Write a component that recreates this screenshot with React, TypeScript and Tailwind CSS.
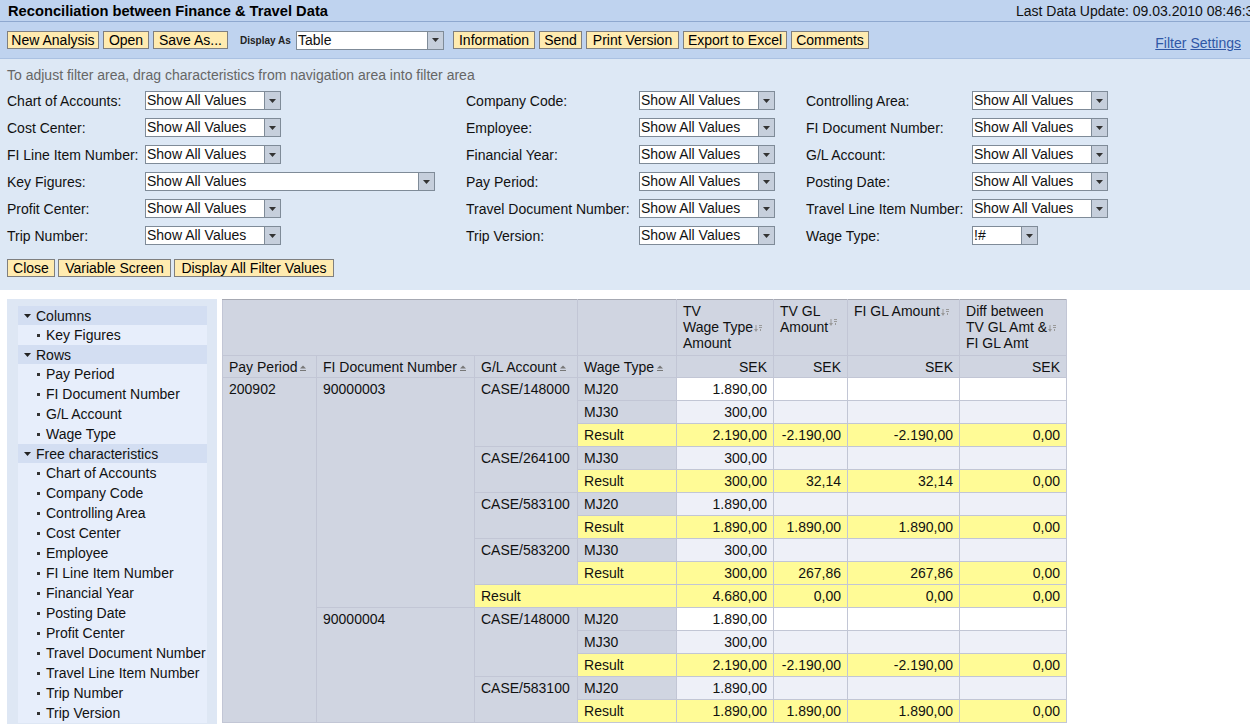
import React from 'react';

type Cell = [string, number];
interface Row {
  pay?: Cell;
  doc?: Cell;
  gl?: Cell;
  wt?: string;
  docResult?: boolean;
  vals: string[];
  bg: 'w' | 'a' | 'y';
}

const rows: Row[] = [
  { pay: ['200902', 15], doc: ['90000003', 10], gl: ['CASE/148000', 3], wt: 'MJ20', vals: ['1.890,00', '', '', ''], bg: 'w' },
  { wt: 'MJ30', vals: ['300,00', '', '', ''], bg: 'a' },
  { wt: 'Result', vals: ['2.190,00', '-2.190,00', '-2.190,00', '0,00'], bg: 'y' },
  { gl: ['CASE/264100', 2], wt: 'MJ30', vals: ['300,00', '', '', ''], bg: 'a' },
  { wt: 'Result', vals: ['300,00', '32,14', '32,14', '0,00'], bg: 'y' },
  { gl: ['CASE/583100', 2], wt: 'MJ20', vals: ['1.890,00', '', '', ''], bg: 'a' },
  { wt: 'Result', vals: ['1.890,00', '1.890,00', '1.890,00', '0,00'], bg: 'y' },
  { gl: ['CASE/583200', 2], wt: 'MJ30', vals: ['300,00', '', '', ''], bg: 'a' },
  { wt: 'Result', vals: ['300,00', '267,86', '267,86', '0,00'], bg: 'y' },
  { docResult: true, vals: ['4.680,00', '0,00', '0,00', '0,00'], bg: 'y' },
  { doc: ['90000004', 5], gl: ['CASE/148000', 3], wt: 'MJ20', vals: ['1.890,00', '', '', ''], bg: 'w' },
  { wt: 'MJ30', vals: ['300,00', '', '', ''], bg: 'a' },
  { wt: 'Result', vals: ['2.190,00', '-2.190,00', '-2.190,00', '0,00'], bg: 'y' },
  { gl: ['CASE/583100', 2], wt: 'MJ20', vals: ['1.890,00', '', '', ''], bg: 'a' },
  { wt: 'Result', vals: ['1.890,00', '1.890,00', '1.890,00', '0,00'], bg: 'y' },
];

const filters: [string, string, string][] = [
  ['Chart of Accounts:', 'Company Code:', 'Controlling Area:'],
  ['Cost Center:', 'Employee:', 'FI Document Number:'],
  ['FI Line Item Number:', 'Financial Year:', 'G/L Account:'],
  ['Key Figures:', 'Pay Period:', 'Posting Date:'],
  ['Profit Center:', 'Travel Document Number:', 'Travel Line Item Number:'],
  ['Trip Number:', 'Trip Version:', 'Wage Type:'],
];

const navSections = [
  { title: 'Columns', items: ['Key Figures'] },
  { title: 'Rows', items: ['Pay Period', 'FI Document Number', 'G/L Account', 'Wage Type'] },
  {
    title: 'Free characteristics',
    items: [
      'Chart of Accounts',
      'Company Code',
      'Controlling Area',
      'Cost Center',
      'Employee',
      'FI Line Item Number',
      'Financial Year',
      'Posting Date',
      'Profit Center',
      'Travel Document Number',
      'Travel Line Item Number',
      'Trip Number',
      'Trip Version',
    ],
  },
];

// buttons get a fixed width so they line up with the original toolbar
function Btn({ children, className = '' }: { children: React.ReactNode; className?: string }) {
  return (
    <button
      className={`h-[18px] border border-[#7f7f7f] bg-[#ffebb0] text-[14px] leading-[15px] text-black whitespace-nowrap text-center ${className}`}
    >
      {children}
    </button>
  );
}

function DropSelect({ value, className }: { value: string; className: string }) {
  return (
    <div className={`flex h-[19px] border border-[#7f8b98] bg-white ${className}`}>
      <span className="flex-1 pl-[1px] text-[14px] leading-[16px] whitespace-nowrap overflow-hidden">{value}</span>
      <span className="w-[16px] shrink-0 bg-[#c6cfdc] border-l border-[#7f8b98] flex items-center justify-center">
        <svg width="7" height="4" viewBox="0 0 7 4">
          <path d="M0 0h7L3.5 4z" fill="#333" />
        </svg>
      </span>
    </div>
  );
}

function SortIcon() {
  return (
    <svg width="6" height="7" viewBox="0 0 6 7" className="inline-block ml-[3px] align-baseline">
      <path d="M0 3.5L3 0.5L6 3.5z" fill="#777" />
      <rect x="0" y="5" width="6" height="1" fill="#777" />
    </svg>
  );
}

function KfIcon({ raised }: { raised?: boolean }) {
  return (
    <svg
      width="8"
      height="7"
      viewBox="0 0 8 7"
      className={`inline-block ml-[1px] ${raised ? 'align-text-top' : 'align-middle'}`}
    >
      <rect x="1.5" y="0" width="1" height="5" fill="#999" />
      <path d="M0 4h4L2 7z" fill="#999" />
      <rect x="5" y="0" width="3" height="1" fill="#999" />
      <rect x="5" y="2" width="3" height="1" fill="#999" />
      <rect x="6" y="4" width="1" height="2" fill="#999" />
    </svg>
  );
}

function Nav() {
  return (
    <div className="w-[210px] shrink-0 bg-[#dee7f4] pl-[11px] pr-[10px] pt-[7px] pb-[4px]">
      <div className="bg-[#e7eefb] text-[14px] leading-[16px] text-[#111]">
        {navSections.map((s) => (
          <div key={s.title}>
            <div className="h-[19px] flex items-center bg-[#d3def2] pl-[6px] pt-[1px]">
              <svg width="7" height="4" viewBox="0 0 7 4" className="mr-[5px]">
                <path d="M0 0h7L3.5 4z" fill="#222" />
              </svg>
              <span>{s.title}</span>
            </div>
            {s.items.map((it) => (
              <div key={it} className="h-[20px] flex items-center pl-[19px] whitespace-nowrap">
                <span className="w-[3px] h-[3px] bg-[#333] mr-[6px] shrink-0" />
                <span>{it}</span>
              </div>
            ))}
          </div>
        ))}
      </div>
    </div>
  );
}

const cb = 'border border-[#c2c6d5]';
const chr = `${cb} bg-[#d0d5e1] px-[6px] text-left font-normal whitespace-nowrap`;
const bgMap = { w: 'bg-white', a: 'bg-[#eef0f8]', y: 'bg-[#fffb96]' };

function DataTable() {
  return (
    <table className="border-collapse table-fixed w-[845px] text-[14px] leading-[16px] text-[#111] border-t border-[#a6a9b3]">
      <colgroup>
        <col className="w-[94px]" />
        <col className="w-[158px]" />
        <col className="w-[103px]" />
        <col className="w-[99px]" />
        <col className="w-[97px]" />
        <col className="w-[74px]" />
        <col className="w-[112px]" />
        <col className="w-[107px]" />
      </colgroup>
      <thead>
        <tr className="h-[56px]">
          <th colSpan={3} className={`${chr} border-t-[#a6a9b3]`} />
          <th className={`${chr} border-t-[#a6a9b3]`} />
          <th className={`${chr} border-t-[#a6a9b3] align-top pt-[3px]`}>
            TV
            <br />
            Wage Type
            <KfIcon />
            <br />
            Amount
          </th>
          <th className={`${chr} border-t-[#a6a9b3] align-top pt-[3px]`}>
            TV GL
            <br />
            Amount
            <KfIcon raised />
          </th>
          <th className={`${chr} border-t-[#a6a9b3] align-top pt-[3px]`}>
            FI GL Amount
            <KfIcon />
          </th>
          <th className={`${chr} border-t-[#a6a9b3] align-top pt-[3px]`}>
            Diff between
            <br />
            TV GL Amt &amp;
            <KfIcon />
            <br />
            FI GL Amt
          </th>
        </tr>
        <tr className="h-[22px]">
          {['Pay Period', 'FI Document Number', 'G/L Account', 'Wage Type'].map((h) => (
            <th key={h} className={`${chr} align-middle`}>
              {h}
              <SortIcon />
            </th>
          ))}
          {[0, 1, 2, 3].map((i) => (
            <th key={i} className={`${chr} text-right align-middle`}>
              SEK
            </th>
          ))}
        </tr>
      </thead>
      <tbody>
        {rows.map((r, i) => (
          <tr key={i} className="h-[23px]">
            {r.pay && (
              <td rowSpan={r.pay[1]} className={`${chr} align-top pt-[3px]`}>
                {r.pay[0]}
              </td>
            )}
            {r.doc && (
              <td rowSpan={r.doc[1]} className={`${chr} align-top pt-[3px]`}>
                {r.doc[0]}
              </td>
            )}
            {r.gl && (
              <td rowSpan={r.gl[1]} className={`${chr} align-top pt-[3px]`}>
                {r.gl[0]}
              </td>
            )}
            {r.docResult ? (
              <td colSpan={2} className={`${cb} ${bgMap.y} px-[6px] align-middle`}>
                Result
              </td>
            ) : r.wt === 'Result' ? (
              <td className={`${cb} ${bgMap.y} px-[6px] align-middle`}>Result</td>
            ) : (
              <td className={`${chr} align-middle`}>{r.wt}</td>
            )}
            {r.vals.map((v, j) => (
              <td key={j} className={`${cb} ${bgMap[r.bg]} text-right px-[6px] align-middle whitespace-nowrap`}>
                {v}
              </td>
            ))}
          </tr>
        ))}
      </tbody>
    </table>
  );
}

export default function App() {
  return (
    <div className="w-[1250px] h-[724px] overflow-hidden bg-white font-['Liberation_Sans',Arial,sans-serif] text-[#111]">
      {/* title bar */}
      <div className="h-[22px] flex items-center overflow-hidden bg-[#bfd3ef] border-b border-[#8ea8cf] text-[14px] leading-[16px]">
        <div className="w-[1016px] shrink-0 pl-[8px] font-bold text-[14.7px] text-black">
          Reconciliation between Finance &amp; Travel Data
        </div>
        <div className="whitespace-nowrap">Last Data Update: 09.03.2010 08:46:34</div>
      </div>

      {/* toolbar */}
      <div className="h-[37px] flex items-center pl-[7px] pr-[9px] bg-[#bfd3ef] border-b border-[#aac1e2]">
        <div className="flex items-center gap-[4px]">
          <Btn className="w-[92px]">New Analysis</Btn>
          <Btn className="w-[46px]">Open</Btn>
          <Btn className="w-[75px]">Save As...</Btn>
        </div>
        <span className="ml-[12px] w-[56px] text-[10px] font-bold text-[#222]">Display As</span>
        <DropSelect value="Table" className="w-[148px]" />
        <div className="flex items-center gap-[4px] ml-[9px]">
          <Btn className="w-[82px]">Information</Btn>
          <Btn className="w-[43px]">Send</Btn>
          <Btn className="w-[93px]">Print Version</Btn>
          <Btn className="w-[104px]">Export to Excel</Btn>
          <Btn className="w-[78px]">Comments</Btn>
        </div>
        <div className="ml-auto mt-[6px] text-[14px] text-[#2f57a6] flex gap-[4px]">
          <a className="underline cursor-pointer">Filter</a>
          <a className="underline cursor-pointer">Settings</a>
        </div>
      </div>

      {/* filter area */}
      <div className="bg-[#dde8f5] px-[7px] pt-[8px] pb-[13px] text-[14px] leading-[16px]">
        <div className="text-[#666] mb-[4px]">To adjust filter area, drag characteristics from navigation area into filter area</div>
        <div className="grid grid-cols-[459px_340px_1fr] auto-rows-[27px]">
          {filters.map((row) => (
            <React.Fragment key={row[0]}>
              <div className="flex items-center">
                <span className="w-[138px] shrink-0 whitespace-nowrap">{row[0]}</span>
                <DropSelect value="Show All Values" className={row[0] === 'Key Figures:' ? 'w-[290px]' : 'w-[136px]'} />
              </div>
              <div className="flex items-center">
                <span className="w-[173px] shrink-0 whitespace-nowrap">{row[1]}</span>
                <DropSelect value="Show All Values" className="w-[136px]" />
              </div>
              <div className="flex items-center">
                <span className="w-[166px] shrink-0 whitespace-nowrap">{row[2]}</span>
                {row[2] === 'Wage Type:' ? (
                  <DropSelect value="!#" className="w-[66px]" />
                ) : (
                  <DropSelect value="Show All Values" className="w-[136px]" />
                )}
              </div>
            </React.Fragment>
          ))}
        </div>
        <div className="flex gap-[3px] mt-[10px]">
          <Btn className="w-[48px]">Close</Btn>
          <Btn className="w-[113px]">Variable Screen</Btn>
          <Btn className="w-[160px]">Display All Filter Values</Btn>
        </div>
      </div>

      {/* navigation + table */}
      <div className="flex items-start gap-[5px] pl-[7px] pt-[9px]">
        <Nav />
        <DataTable />
      </div>
    </div>
  );
}
